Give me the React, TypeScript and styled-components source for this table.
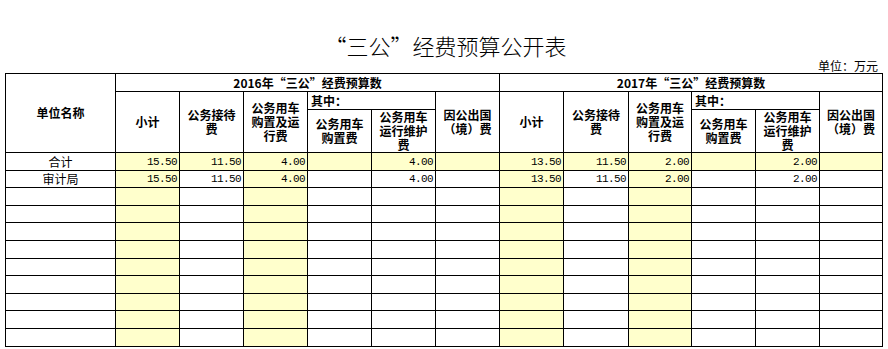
import React, {FC} from 'react';
import styled, {createGlobalStyle} from 'styled-components';

const GlobalStyle = createGlobalStyle`
	body {
		margin: 0;
		background: #fff;
		color: #000;
		font-family: "Noto Sans CJK SC", sans-serif;
	}
`;

const StyledPage = styled.div`
	width: 877px;
	margin-left: 5px;
	padding-top: 31px;
`;

const StyledTitle = styled.h1`
	margin: 0;
	padding-left: 4px;
	font-size: 22px;
	font-weight: 300;
	line-height: 28px;
	text-align: center;
`;

const StyledUnit = styled.div`
	padding-right: 4px;
	font-size: 12px;
	line-height: 14px;
	text-align: right;
`;

const StyledTable = styled.table`
	width: 877px;
	border-collapse: collapse;
	table-layout: fixed;
`;

const StyledRow = styled.tr<{$h: number}>`
	height: ${({$h}) => $h}px;
`;

const StyledHead = styled.th<{$left?: boolean}>`
	border: 1px solid #000;
	padding: 0 4px;
	font-size: 12px;
	font-weight: bold;
	line-height: 14px;
	text-align: ${({$left}) => ($left ? 'left' : 'center')};
	vertical-align: middle;
	${({$left}) => ($left ? 'padding-left: 3px;' : '')}
`;

const StyledName = styled.td`
	border: 1px solid #000;
	padding: 0 2px 1px;
	font-size: 12px;
	line-height: 14px;
	text-align: center;
	vertical-align: bottom;
`;

const StyledValue = styled.td<{$fill: boolean}>`
	border: 1px solid #000;
	padding: 0 2px 1px 0;
	background: ${({$fill}) => ($fill ? '#ffffcc' : '#fff')};
	font-family: "Liberation Mono", monospace;
	font-size: 11px;
	letter-spacing: -0.6px;
	line-height: 14px;
	text-align: right;
	vertical-align: bottom;
`;

const widths = [110, 64, 64, 64, 64, 64, 64, 64, 65, 63, 64, 64, 63];
const filledColumns = [0, 2, 6, 8];

interface IRow {
	name: string;
	values: string[];
	total?: boolean;
}

const year2016 = ['15.50', '11.50', '4.00', '', '4.00', ''];
const year2017 = ['13.50', '11.50', '2.00', '', '2.00', ''];

const rows: IRow[] = [
	{name: '合计', values: [...year2016, ...year2017], total: true},
	{name: '审计局', values: [...year2016, ...year2017]},
	...Array.from({length: 9}, () => ({name: '', values: Array(12).fill('')}))
];

const YearHeads: FC = () => (
	<>
		<StyledHead rowSpan={2}>小计</StyledHead>
		<StyledHead rowSpan={2}>公务接待费</StyledHead>
		<StyledHead rowSpan={2}>公务用车购置及运行费</StyledHead>
		<StyledHead colSpan={2} $left>
			其中：
		</StyledHead>
		<StyledHead rowSpan={2}>因公出国（境）费</StyledHead>
	</>
);

const SubHeads: FC = () => (
	<>
		<StyledHead>公务用车购置费</StyledHead>
		<StyledHead>公务用车运行维护费</StyledHead>
	</>
);

const App: FC = () => (
	<>
		<GlobalStyle />
		<StyledPage>
			<StyledTitle>“三公”经费预算公开表</StyledTitle>
			<StyledUnit>单位：万元</StyledUnit>
			<StyledTable>
				<colgroup>
					{widths.map((w, i) => (
						<col key={i} style={{width: w}} />
					))}
				</colgroup>
				<thead>
					<StyledRow $h={18}>
						<StyledHead rowSpan={3}>单位名称</StyledHead>
						<StyledHead colSpan={6}>2016年“三公”经费预算数</StyledHead>
						<StyledHead colSpan={6}>2017年“三公”经费预算数</StyledHead>
					</StyledRow>
					<StyledRow $h={18}>
						<YearHeads />
						<YearHeads />
					</StyledRow>
					<StyledRow $h={43}>
						<SubHeads />
						<SubHeads />
					</StyledRow>
				</thead>
				<tbody>
					{rows.map((row, r) => (
						<StyledRow key={r} $h={17.6}>
							<StyledName>{row.name}</StyledName>
							{row.values.map((v, i) => (
								<StyledValue key={i} $fill={!!row.total || filledColumns.includes(i)}>
									{v}
								</StyledValue>
							))}
						</StyledRow>
					))}
				</tbody>
			</StyledTable>
		</StyledPage>
	</>
);

export default App;
